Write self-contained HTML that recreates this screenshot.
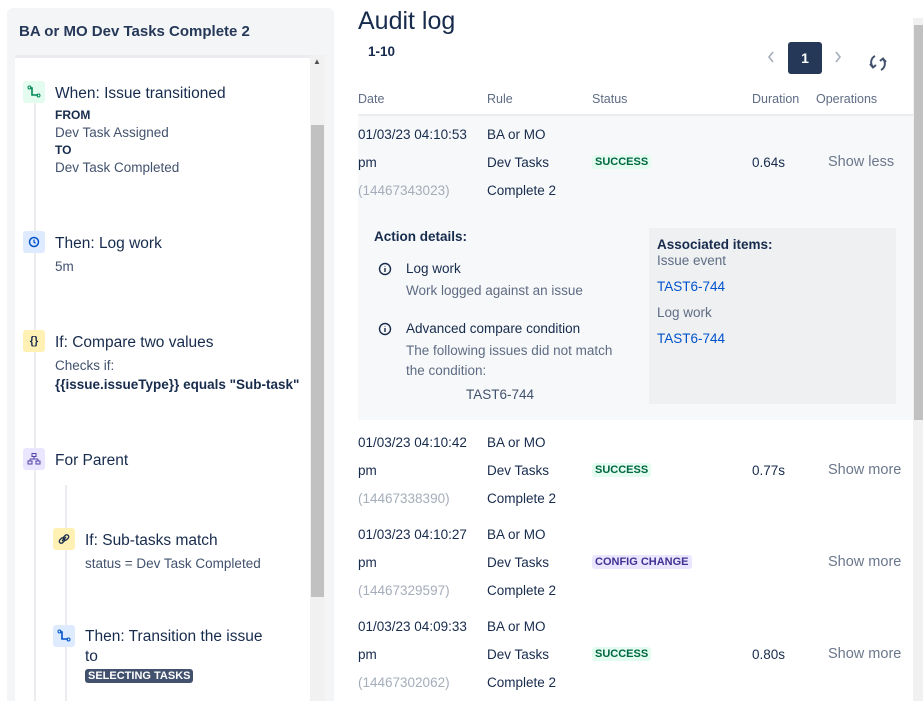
<!DOCTYPE html>
<html style="width:923px;height:701px;overflow:hidden"><head><style>
*{margin:0;padding:0;box-sizing:border-box}
body{width:923px;height:701px;overflow:hidden;background:#fff;font-family:"Liberation Sans",sans-serif;color:#172b4d;position:relative;font-size:14px}
.a{position:absolute;white-space:nowrap}
.ic{position:absolute;width:22px;height:22px;border-radius:3px}
.t{font-size:15.5px;color:#172b4d}
.s{font-size:13.5px;color:#42526e}
.g{color:#a5adba}
.lz{font-size:11px;font-weight:bold;padding:1px 3px;border-radius:3px}
.lk{color:#0052cc}
</style></head><body>
<div class="a" style="left:7px;top:8px;width:327px;height:693px;background:#f4f5f7;border-radius:6px 6px 0 0"></div>
<div class="a" style="left:19px;top:23px;font-size:15px;font-weight:bold;color:#253858">BA or MO Dev Tasks Complete 2</div>
<div class="a" style="left:15px;top:55px;width:295px;height:646px;background:#fff;border-top:3px solid #ebecf0"></div>
<div class="a" style="left:310px;top:55px;width:15px;height:646px;background:#f1f1f1"></div>
<div class="a" style="left:311px;top:125px;width:13px;height:472px;background:#c1c1c1"></div>
<div class="a" style="left:313px;top:57px;font-size:8px;color:#505050">▲</div>
<div class="a" style="left:34px;top:100px;width:2px;height:601px;background:#ebecf0"></div>
<div class="a" style="left:65px;top:485px;width:2px;height:216px;background:#ebecf0"></div>

<div class="ic" style="left:23px;top:81px;background:#e3fcef"><svg width="22" height="22"><path d="M7 7 L9 7 L9 14 L15 14" fill="none" stroke="#00875a" stroke-width="1.6"/><circle cx="6.5" cy="6.5" r="1.5" fill="none" stroke="#00875a"/><circle cx="15.5" cy="14.5" r="1.5" fill="none" stroke="#00875a"/></svg></div>
<div class="a t" style="left:55px;top:85px">When: Issue transitioned</div>
<div class="a" style="left:55px;top:108px;font-size:12px;font-weight:bold;color:#172b4d">FROM</div>
<div class="a s" style="left:55px;top:125px">Dev Task Assigned</div>
<div class="a" style="left:55px;top:143px;font-size:12px;font-weight:bold">TO</div>
<div class="a s" style="left:55px;top:160px">Dev Task Completed</div>

<div class="ic" style="left:23px;top:231px;background:#deebff"><svg width="22" height="22"><circle cx="11" cy="11" r="4.5" fill="none" stroke="#0052cc" stroke-width="1.5"/><path d="M11 8.5V11.2L12.6 12.4" fill="none" stroke="#0052cc" stroke-width="1.3"/></svg></div>
<div class="a t" style="left:55px;top:235px">Then: Log work</div>
<div class="a s" style="left:55px;top:259px">5m</div>

<div class="ic" style="left:23px;top:330px;background:#fff0b3"><div style="font-size:11px;font-weight:bold;text-align:center;line-height:22px;color:#172b4d">{}</div></div>
<div class="a t" style="left:55px;top:334px">If: Compare two values</div>
<div class="a s" style="left:55px;top:358px">Checks if:</div>
<div class="a" style="left:55px;top:377px;font-size:13.5px;font-weight:bold">{{issue.issueType}} equals "Sub-task"</div>

<div class="ic" style="left:23px;top:448px;background:#eae6ff"><svg width="22" height="22"><rect x="9" y="5.5" width="4" height="3" fill="none" stroke="#5243aa"/><path d="M11 8.5V11M7 11H15M7 11V13M15 11V13" stroke="#5243aa" fill="none"/><rect x="5" y="13" width="4" height="3" fill="none" stroke="#5243aa"/><rect x="13" y="13" width="4" height="3" fill="none" stroke="#5243aa"/></svg></div>
<div class="a t" style="left:55px;top:452px">For Parent</div>

<div class="ic" style="left:53px;top:528px;background:#fff0b3"><svg width="22" height="22"><path d="M9 13 L13 9" stroke="#172b4d" stroke-width="1.4"/><rect x="6" y="10.5" width="6" height="4" rx="2" transform="rotate(-45 9 12.5)" fill="none" stroke="#172b4d" stroke-width="1.3"/><rect x="10" y="7.5" width="6" height="4" rx="2" transform="rotate(-45 13 9.5)" fill="none" stroke="#172b4d" stroke-width="1.3"/></svg></div>
<div class="a t" style="left:85px;top:532px">If: Sub-tasks match</div>
<div class="a s" style="left:85px;top:556px">status = Dev Task Completed</div>

<div class="ic" style="left:53px;top:625px;background:#deebff"><svg width="22" height="22"><path d="M7 7 L9 7 L9 14 L15 14" fill="none" stroke="#0052cc" stroke-width="1.6"/><circle cx="6.5" cy="6.5" r="1.5" fill="none" stroke="#0052cc"/><circle cx="15.5" cy="14.5" r="1.5" fill="none" stroke="#0052cc"/></svg></div>
<div class="a t" style="left:85px;top:628px">Then: Transition the issue</div>
<div class="a t" style="left:85px;top:648px">to</div>
<div class="a" style="left:85px;top:669px;background:#42526e;color:#fff;font-size:11px;font-weight:bold;padding:1px 3px;border-radius:3px">SELECTING TASKS</div>

<div class="a" style="left:913px;top:18px;width:10px;height:683px;background:#f1f1f1"></div>
<div class="a" style="left:914px;top:25px;width:9px;height:395px;background:#c1c1c1"></div>
<div class="a" style="left:358px;top:7px;font-size:25px;color:#172b4d">Audit log</div>
<div class="a" style="left:368px;top:44px;font-size:13.5px;font-weight:bold">1-10</div>
<svg class="a" style="left:766px;top:50px" width="10" height="14"><path d="M7 2 L3 7 L7 12" fill="none" stroke="#a5adba" stroke-width="1.6"/></svg>
<div class="a" style="left:788px;top:42px;width:34px;height:32px;background:#253858;border-radius:3px;color:#fff;font-size:14px;font-weight:bold;text-align:center;line-height:32px">1</div>
<svg class="a" style="left:833px;top:50px" width="10" height="14"><path d="M3 2 L7 7 L3 12" fill="none" stroke="#a5adba" stroke-width="1.6"/></svg>
<svg class="a" style="left:867px;top:52px" width="22" height="22"><path d="M8 4 A7 7 0 0 0 6 15" fill="none" stroke="#42526e" stroke-width="2"/><path d="M3 12 L6 15.5 L9 13" fill="none" stroke="#42526e" stroke-width="2"/><path d="M14 18 A7 7 0 0 0 16 7" fill="none" stroke="#42526e" stroke-width="2"/><path d="M19 10 L16 6.5 L13 9" fill="none" stroke="#42526e" stroke-width="2"/></svg>

<div class="a" style="left:358px;top:92px;font-size:12.5px;color:#5e6c84">Date</div>
<div class="a" style="left:487px;top:92px;font-size:12.5px;color:#5e6c84">Rule</div>
<div class="a" style="left:592px;top:92px;font-size:12.5px;color:#5e6c84">Status</div>
<div class="a" style="left:752px;top:92px;font-size:12.5px;color:#5e6c84">Duration</div>
<div class="a" style="left:816px;top:92px;font-size:12.5px;color:#5e6c84">Operations</div>
<div class="a" style="left:358px;top:114px;width:555px;height:2px;background:#ebecf0"></div>

<div class="a" style="left:358px;top:116px;width:555px;height:304px;background:#f7f8f9"></div>
<div class="a" style="left:649px;top:228px;width:247px;height:176px;background:#eef0f2"></div>

<div class="a" style="left:358px;top:127px;font-size:13.5px">01/03/23 04:10:53</div>
<div class="a" style="left:358px;top:155px;font-size:13.5px">pm</div>
<div class="a g" style="left:358px;top:183px;font-size:13.5px">(14467343023)</div>
<div class="a" style="left:487px;top:127px;font-size:13.5px">BA or MO</div>
<div class="a" style="left:487px;top:155px;font-size:13.5px">Dev Tasks</div>
<div class="a" style="left:487px;top:183px;font-size:13.5px">Complete 2</div>
<div class="a lz" style="left:592px;top:155px;background:#e3fcef;color:#006644">SUCCESS</div>
<div class="a" style="left:752px;top:155px;font-size:13.5px">0.64s</div>
<div class="a" style="left:828px;top:154px;font-size:14.5px;color:#6b778c">Show less</div>

<div class="a" style="left:374px;top:229px;font-size:13.5px;font-weight:bold;color:#172b4d">Action details:</div>
<svg class="a" style="left:378px;top:262px" width="14" height="14"><circle cx="7" cy="7" r="5.5" fill="none" stroke="#172b4d" stroke-width="1.4"/><path d="M7 6V10M7 4.2V4.8" stroke="#172b4d" stroke-width="1.4"/></svg>
<div class="a s" style="left:406px;top:261px;color:#172b4d">Log work</div>
<div class="a s" style="left:406px;top:283px;color:#5e6c84">Work logged against an issue</div>
<svg class="a" style="left:378px;top:322px" width="14" height="14"><circle cx="7" cy="7" r="5.5" fill="none" stroke="#172b4d" stroke-width="1.4"/><path d="M7 6V10M7 4.2V4.8" stroke="#172b4d" stroke-width="1.4"/></svg>
<div class="a s" style="left:406px;top:321px;color:#172b4d">Advanced compare condition</div>
<div class="a s" style="left:406px;top:343px;color:#5e6c84">The following issues did not match</div>
<div class="a s" style="left:406px;top:363px;color:#5e6c84">the condition:</div>
<div class="a s" style="left:466px;top:387px;color:#42526e">TAST6-744</div>
<div class="a" style="left:657px;top:237px;font-size:13.5px;font-weight:bold">Associated items:</div>
<div class="a s" style="left:657px;top:253px;color:#5e6c84">Issue event</div>
<div class="a s lk" style="left:657px;top:279px">TAST6-744</div>
<div class="a s" style="left:657px;top:305px;color:#5e6c84">Log work</div>
<div class="a s lk" style="left:657px;top:331px">TAST6-744</div>

<div class="a" style="left:358px;top:435px;font-size:13.5px">01/03/23 04:10:42</div>
<div class="a" style="left:358px;top:463px;font-size:13.5px">pm</div>
<div class="a g" style="left:358px;top:491px;font-size:13.5px">(14467338390)</div>
<div class="a" style="left:487px;top:435px;font-size:13.5px">BA or MO</div>
<div class="a" style="left:487px;top:463px;font-size:13.5px">Dev Tasks</div>
<div class="a" style="left:487px;top:491px;font-size:13.5px">Complete 2</div>
<div class="a lz" style="left:592px;top:463px;background:#e3fcef;color:#006644">SUCCESS</div>
<div class="a" style="left:752px;top:463px;font-size:13.5px">0.77s</div>
<div class="a" style="left:828px;top:462px;font-size:14.5px;color:#6b778c">Show more</div>

<div class="a" style="left:358px;top:527px;font-size:13.5px">01/03/23 04:10:27</div>
<div class="a" style="left:358px;top:555px;font-size:13.5px">pm</div>
<div class="a g" style="left:358px;top:583px;font-size:13.5px">(14467329597)</div>
<div class="a" style="left:487px;top:527px;font-size:13.5px">BA or MO</div>
<div class="a" style="left:487px;top:555px;font-size:13.5px">Dev Tasks</div>
<div class="a" style="left:487px;top:583px;font-size:13.5px">Complete 2</div>
<div class="a lz" style="left:592px;top:555px;background:#eae6ff;color:#403294">CONFIG CHANGE</div>
<div class="a" style="left:828px;top:554px;font-size:14.5px;color:#6b778c">Show more</div>

<div class="a" style="left:358px;top:619px;font-size:13.5px">01/03/23 04:09:33</div>
<div class="a" style="left:358px;top:647px;font-size:13.5px">pm</div>
<div class="a g" style="left:358px;top:675px;font-size:13.5px">(14467302062)</div>
<div class="a" style="left:487px;top:619px;font-size:13.5px">BA or MO</div>
<div class="a" style="left:487px;top:647px;font-size:13.5px">Dev Tasks</div>
<div class="a" style="left:487px;top:675px;font-size:13.5px">Complete 2</div>
<div class="a lz" style="left:592px;top:647px;background:#e3fcef;color:#006644">SUCCESS</div>
<div class="a" style="left:752px;top:647px;font-size:13.5px">0.80s</div>
<div class="a" style="left:828px;top:646px;font-size:14.5px;color:#6b778c">Show more</div>
</body></html>
